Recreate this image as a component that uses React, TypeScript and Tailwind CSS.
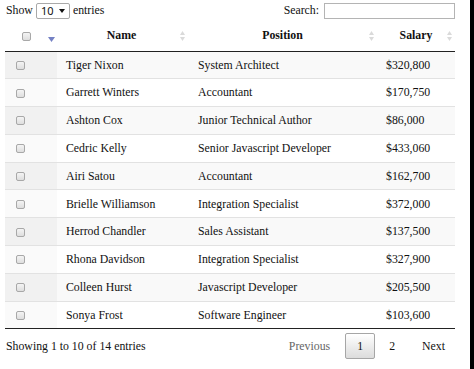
import React from 'react';

const rows = [
  { name: 'Tiger Nixon', position: 'System Architect', salary: '$320,800' },
  { name: 'Garrett Winters', position: 'Accountant', salary: '$170,750' },
  { name: 'Ashton Cox', position: 'Junior Technical Author', salary: '$86,000' },
  { name: 'Cedric Kelly', position: 'Senior Javascript Developer', salary: '$433,060' },
  { name: 'Airi Satou', position: 'Accountant', salary: '$162,700' },
  { name: 'Brielle Williamson', position: 'Integration Specialist', salary: '$372,000' },
  { name: 'Herrod Chandler', position: 'Sales Assistant', salary: '$137,500' },
  { name: 'Rhona Davidson', position: 'Integration Specialist', salary: '$327,900' },
  { name: 'Colleen Hurst', position: 'Javascript Developer', salary: '$205,500' },
  { name: 'Sonya Frost', position: 'Software Engineer', salary: '$103,600' },
];

const SortBoth = () => (
  <svg width="5" height="10" viewBox="0 0 5 10" className="absolute right-[3px] top-1/2 -translate-y-1/2">
    <path d="M2.5 0 L5 4 L0 4 Z" fill="#dadada" />
    <path d="M0 6 L5 6 L2.5 10 Z" fill="#dadada" />
  </svg>
);

const Check = () => (
  <div className="w-[9px] h-[9px] rounded-[2px] border border-[#a8a8a8] bg-gradient-to-b from-[#f4f4f4] to-[#dedede]" />
);

export default function App() {
  return (
    <div className="flex h-[369px] w-[474px] bg-white text-[#111]">
      <div className="flex-1 pl-[5px] pr-[15px] font-['Liberation_Serif',serif] text-[11.8px]">
        <div className="flex h-[22px] items-center justify-between">
          <div className="flex items-center">
            <span className="ml-[1px]">Show</span>
            <div className="mx-[3px] flex h-[16px] w-[34px] items-center justify-between rounded-[2px] border border-[#a9a9a9] pl-[4px] pr-[4px] font-sans text-[11px]">
              <span>10</span>
              <svg width="6" height="4" viewBox="0 0 6 4"><path d="M0 0 L6 0 L3 4 Z" fill="#111" /></svg>
            </div>
            <span>entries</span>
          </div>
          <div className="flex items-center">
            <span className="mr-[5px]">Search:</span>
            <div className="h-[16px] w-[131px] border border-[#b4b4b4]" />
          </div>
        </div>

        <table className="w-[450px] table-fixed border-collapse">
          <colgroup>
            <col className="w-[52px]" />
            <col className="w-[131px]" />
            <col className="w-[189px]" />
            <col className="w-[78px]" />
          </colgroup>
          <thead>
            <tr className="h-[29px] border-b border-[#222]">
              <th className="relative p-0">
                <div className="ml-[17px]"><Check /></div>
                <svg width="7" height="5" viewBox="0 0 7 5" className="absolute left-[43px] top-[15px]">
                  <path d="M0 0 L7 0 L3.5 5 Z" fill="#7481c4" />
                </svg>
              </th>
              <th className="relative p-0 pr-[2px] text-center font-bold">Name<SortBoth /></th>
              <th className="relative p-0 text-center font-bold">Position<SortBoth /></th>
              <th className="relative p-0 text-center font-bold">Salary<SortBoth /></th>
            </tr>
          </thead>
          <tbody>
            {rows.map((r, i) => {
              const odd = i % 2 === 0;
              return (
                <tr
                  key={r.name}
                  className={`h-[27.8px] ${i < rows.length - 1 ? 'border-b border-[#e2e2e2]' : 'border-b border-[#222]'} ${odd ? 'bg-[#f9f9f9]' : 'bg-white'}`}
                >
                  <td className={`p-0 pt-[1px] ${odd ? 'bg-[#f1f1f1]' : 'bg-[#fafafa]'}`}>
                    <div className="ml-[11px]"><Check /></div>
                  </td>
                  <td className="p-0 pt-[1px] pl-[9px]">{r.name}</td>
                  <td className="p-0 pt-[1px] pl-[10px]">{r.position}</td>
                  <td className="p-0 pt-[1px] pl-[9px]">{r.salary}</td>
                </tr>
              );
            })}
          </tbody>
        </table>

        <div className="flex items-center justify-between pt-[4px]">
          <span className="ml-[1px]">Showing 1 to 10 of 14 entries</span>
          <div className="flex items-center">
            <span className="mr-[2px] px-[13px] text-[#666]">Previous</span>
            <span className="flex h-[26px] w-[30px] items-center justify-center rounded-[2px] border border-[#a6a6a6] bg-gradient-to-b from-white to-[#dcdcdc]">1</span>
            <span className="ml-[2px] px-[12px]">2</span>
            <span className="ml-[2px] pl-[13px] pr-[10px]">Next</span>
          </div>
        </div>
      </div>
      <div className="h-full w-[4px] bg-black" />
    </div>
  );
}
